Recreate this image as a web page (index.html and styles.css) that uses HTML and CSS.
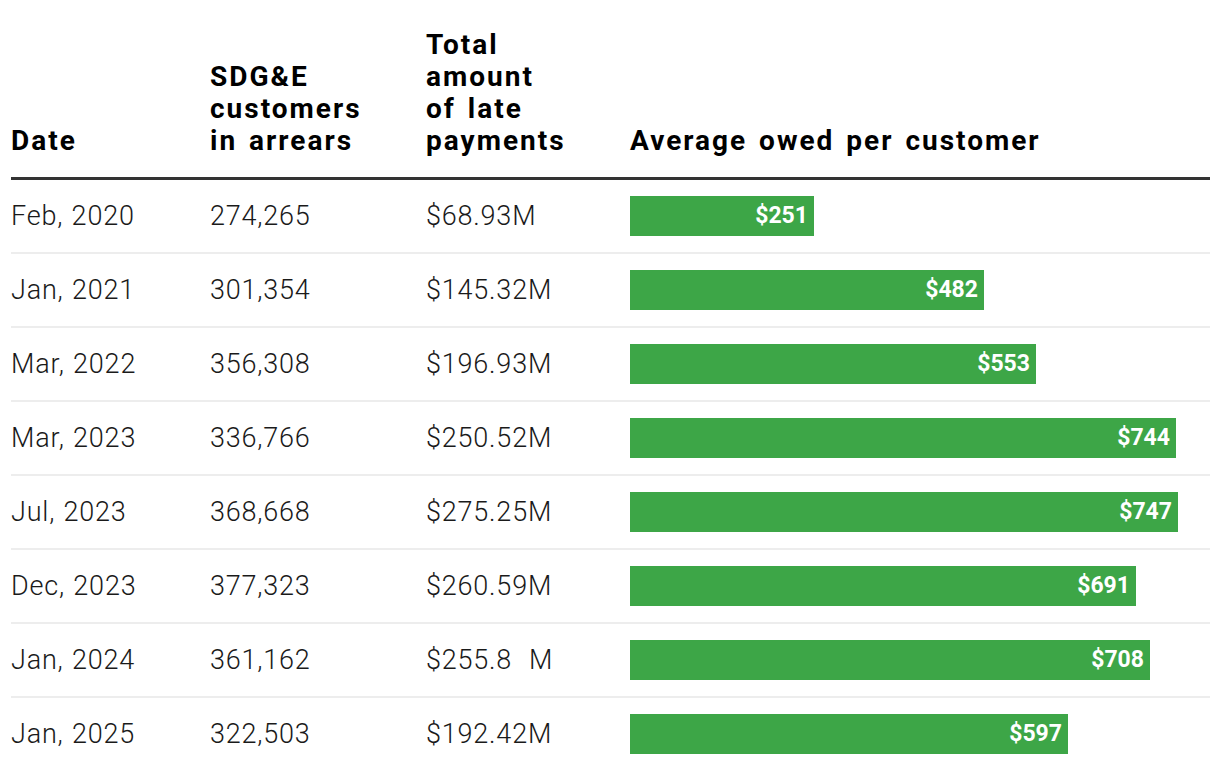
FILE: index.html
```html
<!DOCTYPE html>
<html lang="en">
<head>
<meta charset="utf-8">
<title>SDG&amp;E arrears</title>
<link rel="stylesheet" href="styles.css">
</head>
<body>
<div class="wrap">
<table class="data">
  <thead>
    <tr>
      <th class="c-date">Date</th>
      <th class="c-cust">SDG&amp;E<br>customers<br>in arrears</th>
      <th class="c-total">Total<br>amount<br>of late<br>payments</th>
      <th class="c-avg">Average owed per customer</th>
    </tr>
  </thead>
  <tbody>
    <tr><td>Feb, 2020</td><td>274,265</td><td>$68.93M</td><td class="barcell"><div class="bar" style="width:184px"><span>$251</span></div></td></tr>
    <tr><td>Jan, 2021</td><td>301,354</td><td>$145.32M</td><td class="barcell"><div class="bar" style="width:354px"><span>$482</span></div></td></tr>
    <tr><td>Mar, 2022</td><td>356,308</td><td>$196.93M</td><td class="barcell"><div class="bar" style="width:406px"><span>$553</span></div></td></tr>
    <tr><td>Mar, 2023</td><td>336,766</td><td>$250.52M</td><td class="barcell"><div class="bar" style="width:546px"><span>$744</span></div></td></tr>
    <tr><td>Jul, 2023</td><td>368,668</td><td>$275.25M</td><td class="barcell"><div class="bar" style="width:548px"><span>$747</span></div></td></tr>
    <tr><td>Dec, 2023</td><td>377,323</td><td>$260.59M</td><td class="barcell"><div class="bar" style="width:506px"><span>$691</span></div></td></tr>
    <tr><td>Jan, 2024</td><td>361,162</td><td>$255.8&nbsp;&nbsp;M</td><td class="barcell"><div class="bar" style="width:520px"><span>$708</span></div></td></tr>
    <tr><td>Jan, 2025</td><td>322,503</td><td>$192.42M</td><td class="barcell"><div class="bar" style="width:438px"><span>$597</span></div></td></tr>
  </tbody>
</table>
</div>
</body>
</html>
```
FILE: styles.css
```css
html, body {
  margin: 0;
  padding: 0;
  background: #ffffff;
}
body {
  font-family: Roboto, "Liberation Sans", Arial, sans-serif;
  color: #1a1a1a;
}
.wrap {
  padding: 29px 10px 0 11px;
}
.data {
  width: 1199px;
  border-collapse: collapse;
  table-layout: fixed;
}
.data th {
  text-align: left;
  vertical-align: bottom;
  font-weight: 700;
  font-size: 28px;
  line-height: 32px;
  letter-spacing: 2px;
  word-spacing: 3px;
  color: #000;
  padding: 0 0 20px 0;
  border-bottom: 3px solid #333333;
}
.c-date { width: 199px; }
.c-cust { width: 216px; }
.c-total { width: 204px; }
.data td {
  font-size: 27px;
  font-weight: 300;
  line-height: 40px;
  letter-spacing: 0.8px;
  word-spacing: 1px;
  padding: 16px 0 16px 0;
  border-bottom: 2px solid #ededed;
  white-space: nowrap;
}
.data tbody tr:last-child td {
  border-bottom: none;
}
.bar {
  height: 40px;
  background: #3da647;
  display: flex;
  justify-content: flex-end;
  align-items: center;
}
.bar span {
  color: #fff;
  font-weight: 700;
  font-size: 23px;
  letter-spacing: 0;
  word-spacing: 0;
  padding-right: 6px;
}
```
